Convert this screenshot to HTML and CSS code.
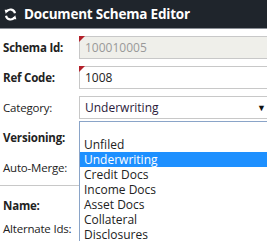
FILE: index.html
```html
<!DOCTYPE html>
<html lang="en">
<head>
  <meta charset="UTF-8">
  <title>Document Schema Editor</title>
  <link rel="stylesheet" href="styles.css">
</head>
<body>
  <header class="topo">
    <svg class="icone" viewBox="0 0 16 16" width="13" height="13">
      <path d="M13.5 6.5A5.6 5.6 0 0 0 3.2 4.6" fill="none" stroke="#fff" stroke-width="2.6"/>
      <path d="M0.8 2.2 L6.2 2.2 L2.2 7.2 Z" fill="#fff"/>
      <path d="M2.5 9.5A5.6 5.6 0 0 0 12.8 11.4" fill="none" stroke="#fff" stroke-width="2.6"/>
      <path d="M15.2 13.8 L9.8 13.8 L13.8 8.8 Z" fill="#fff"/>
    </svg>
    <h1>Document Schema Editor</h1>
  </header>

  <main class="form">
    <div class="linha">
      <label class="forte">Schema Id:</label>
      <div class="campo obrig desab">100010005</div>
    </div>
    <div class="linha">
      <label class="forte">Ref Code:</label>
      <div class="campo obrig">1008</div>
    </div>
    <div class="linha">
      <label>Category:</label>
      <div class="select-wrap">
        <div class="campo select">Underwriting<span class="seta">&#9660;</span></div>
        <ul class="lista">
          <li class="vazio"></li>
          <li>Unfiled</li>
          <li class="ativo">Underwriting</li>
          <li>Credit Docs</li>
          <li>Income Docs</li>
          <li>Asset Docs</li>
          <li>Collateral</li>
          <li>Disclosures</li>
        </ul>
      </div>
    </div>
    <div class="linha">
      <label class="forte">Versioning:</label>
    </div>
    <div class="linha">
      <label>Auto-Merge:</label>
    </div>
    <hr class="divisor">
    <div class="linha">
      <label class="forte">Name:</label>
    </div>
    <div class="linha curta">
      <label>Alternate Ids:</label>
    </div>
  </main>
</body>
</html>
```

FILE: styles.css
```css
:root {
  --escuro: #1f252c;
  --borda: #c8c8c8;
  --texto: #222;
  --vermelho: #b3202a;
  --azul: #1e90ff;
}

* {
  box-sizing: border-box;
  margin: 0;
  padding: 0;
  font-family: 'Open Sans', 'Noto Sans', sans-serif;
}

html, body {
  overflow: hidden;
}

body {
  background: #fff;
  color: var(--texto);
  font-size: 12px;
  width: 267px;
  height: 241px;
}

.topo {
  background: var(--escuro);
  height: 29px;
  border-bottom: 1px solid #8a8f96;
  display: flex;
  align-items: center;
  padding-left: 4px;
  gap: 7px;
}

.topo h1 {
  color: #fff;
  font-size: 13.5px;
  font-weight: 700;
  letter-spacing: -0.2px;
}

.form {
  padding-top: 3px;
}

.linha {
  display: grid;
  grid-template-columns: 79px 200px;
  align-items: center;
  height: 30px;
}

.linha.curta {
  height: 17px;
}

.linha label {
  padding-left: 3px;
  font-size: 11.5px;
  letter-spacing: -0.2px;
}

.forte {
  font-weight: 700;
}

.campo {
  position: relative;
  height: 23px;
  border: 1px solid var(--borda);
  padding: 0 5px;
  line-height: 21px;
  background: #fff;
  font-size: 12px;
}

.desab {
  background: #efefea;
  color: #999;
}

.obrig::before {
  content: "";
  position: absolute;
  top: -1px;
  left: -1px;
  border-top: 6px solid var(--vermelho);
  border-right: 6px solid transparent;
}

.select-wrap {
  position: relative;
}

.select {
  color: #2a1a3a;
}

.seta {
  position: absolute;
  left: 177px;
  top: 0;
  font-size: 9px;
  color: #111;
}

.lista {
  position: absolute;
  top: 25px;
  left: 0;
  width: 200px;
  list-style: none;
  background: #fff;
  border: 1px solid #8aa4c8;
  border-right: none;
  z-index: 10;
}

.lista li {
  height: 15px;
  line-height: 15px;
  padding-left: 4px;
  font-size: 12px;
  color: #222;
}

.lista li.ativo {
  background: var(--azul);
  color: #fff;
}

.divisor {
  border: none;
  border-top: 1px solid var(--borda);
  width: 79px;
  margin: 3px 0 4px;
}
```
